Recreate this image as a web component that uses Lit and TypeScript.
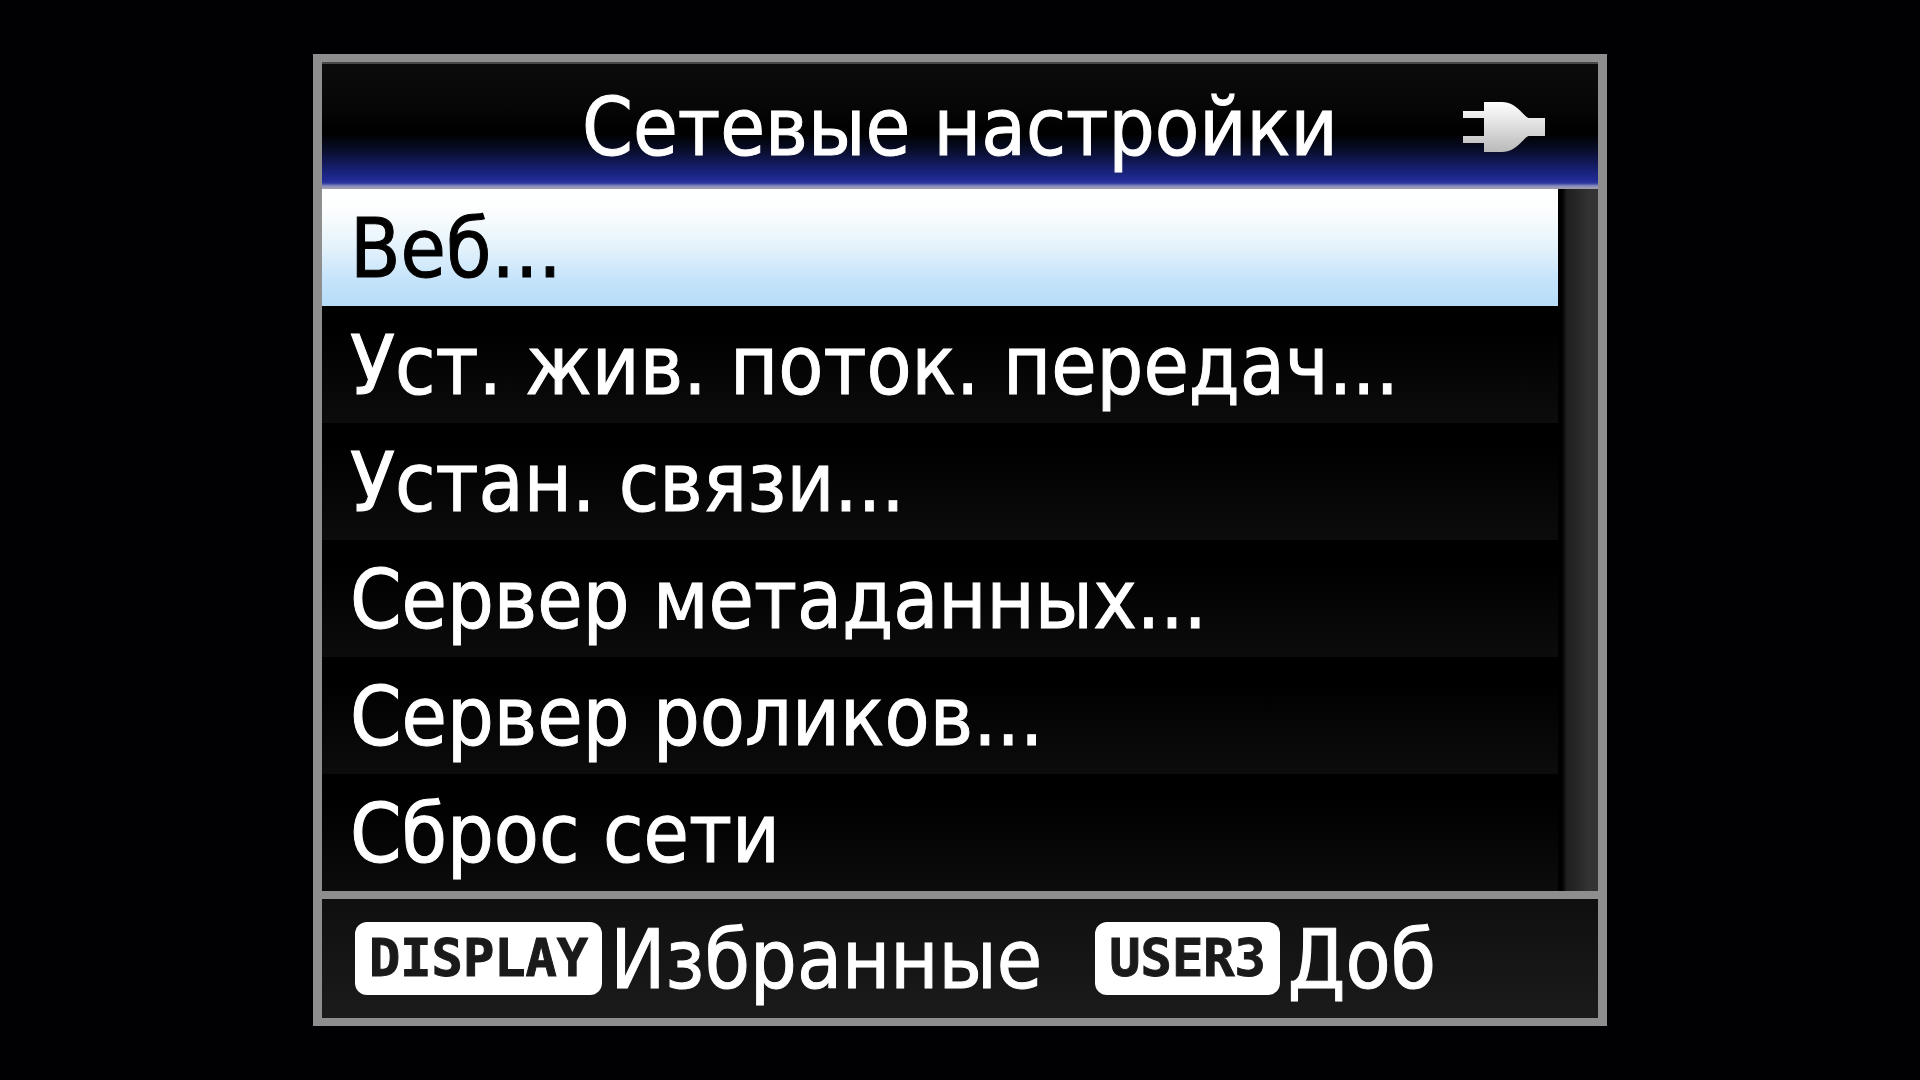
import { LitElement, html, css } from "lit";
import { customElement, state } from "lit/decorators.js";
import { classMap } from "lit/directives/class-map.js";

const ITEMS = [
  "Веб...",
  "Уст. жив. поток. передач...",
  "Устан. связи...",
  "Сервер метаданных...",
  "Сервер роликов...",
  "Сброс сети",
];

const ACTIONS = [
  { key: "DISPLAY", label: "Избранные" },
  { key: "USER3", label: "Доб" },
];

@customElement("power-plug")
export class PowerPlug extends LitElement {
  static styles = css`
    :host {
      display: block;
    }
    .plug {
      display: block;
      width: 82px;
      height: 52px;
    }
  `;

  render() {
    return html`
      <svg class="plug" viewBox="0 0 82 52" role="img" aria-label="Питание от сети">
        <defs>
          <linearGradient id="metal" x1="0" y1="0" x2="0" y2="52" gradientUnits="userSpaceOnUse">
            <stop offset="0" stop-color="#ffffff" />
            <stop offset="0.35" stop-color="#e8e8e8" />
            <stop offset="1" stop-color="#b8b8b8" />
          </linearGradient>
        </defs>
        <path
          fill="url(#metal)"
          d="M21 1 H39 C47 1 52 5 57 9.500 L62 14.500 C64 16.500 65 17 67 17 H82 V35 H67 C65 35 64 35.500 62 37.500 L57 42.500 C52 47 47 51 39 51 H21 V42 H0 V35 H21 V17 H0 V10 H21 Z"
        />
      </svg>
    `;
  }
}

@customElement("app-root")
export class AppRoot extends LitElement {
  static styles = css`
    :host {
      display: flex;
      box-sizing: border-box;
      min-height: 100vh;
      padding: 54px 313px;
      background: #010104;
      color: #fff;
      font-family: "DejaVu Sans Condensed", "DejaVu Sans", sans-serif;
      font-size: 82px;
      line-height: 96px;
      -webkit-text-stroke: 1px currentColor;
    }
    .panel {
      flex: 1;
      min-width: 0;
      display: flex;
      flex-direction: column;
      border: solid #8e8e8e;
      border-width: 8px 9px;
      background: #000;
    }
    .header {
      display: grid;
      grid-template-columns: 1fr auto 1fr;
      align-items: center;
      box-sizing: border-box;
      min-height: 127px;
      padding: 0 53px;
      border-top: 2px solid #484848;
      font-size: 81px;
      background: linear-gradient(
        #0c0c0c 0,
        #060606 45px,
        #000 70px,
        #0a0f30 88px,
        #141c66 102px,
        #1e2a92 115px,
        #2c369c 119px,
        #868cc0 122px,
        #9c9cb0 124px,
        #9a9aa8 125px
      );
    }
    .title {
      grid-column: 2;
      margin: 0;
      font: inherit;
      white-space: nowrap;
    }
    .power {
      justify-self: end;
    }
    .body {
      flex: 1;
      display: flex;
    }
    .list {
      flex: 1;
      min-width: 0;
      display: grid;
      grid-auto-rows: 1fr;
      margin: 0;
      padding: 0;
      list-style: none;
    }
    .entry {
      display: flex;
    }
    .item {
      flex: 1;
      margin: 0;
      padding: 2px 28px 0;
      border: 0;
      background: linear-gradient(#000 20%, #0c0c0c);
      color: inherit;
      font: inherit;
      text-align: left;
      white-space: nowrap;
      outline: none;
    }
    .selected {
      background: linear-gradient(#fff 0, #fcfefe 18%, #e4f2fb 50%, #c6e4fb 76%, #b6dcf8);
      color: #000;
    }
    .track {
      width: 40px;
      background: linear-gradient(to right, #000 4px, #202020 9px, #262626 18px, #333 30px, #343434);
    }
    .footer {
      display: flex;
      align-items: center;
      gap: 53px;
      box-sizing: border-box;
      min-height: 127px;
      padding: 0 33px;
      border-top: 8px solid #8e8e8e;
      background: linear-gradient(#0f0f0f, #1b1b1b);
    }
    .action {
      display: flex;
      align-items: center;
      gap: 8px;
      margin: 0;
      padding: 0;
      border: 0;
      background: none;
      color: inherit;
      font: inherit;
      white-space: nowrap;
    }
    .label {
      padding-top: 2px;
    }
    .key {
      padding: 0 14px;
      border-radius: 12px;
      background: #fff;
      color: #1a1a1a;
      font-family: "DejaVu Sans Mono", monospace;
      font-size: 52px;
      font-weight: 700;
      line-height: 73px;
    }
  `;

  @state() private selected = 0;

  render() {
    return html`
      <main class="panel">
        <header class="header">
          <h1 class="title">Сетевые настройки</h1>
          <power-plug class="power"></power-plug>
        </header>
        <div class="body">
          <ul class="list">
            ${ITEMS.map(
              (label, i) => html`
                <li class="entry">
                  <button
                    type="button"
                    class=${classMap({ item: true, selected: i === this.selected })}
                    @click=${() => (this.selected = i)}
                  >${label}</button>
                </li>
              `
            )}
          </ul>
          <div class="track"></div>
        </div>
        <footer class="footer">
          ${ACTIONS.map(
            (a) => html`
              <button type="button" class="action"><span class="key">${a.key}</span><span class="label">${a.label}</span></button>
            `
          )}
        </footer>
      </main>
    `;
  }
}
